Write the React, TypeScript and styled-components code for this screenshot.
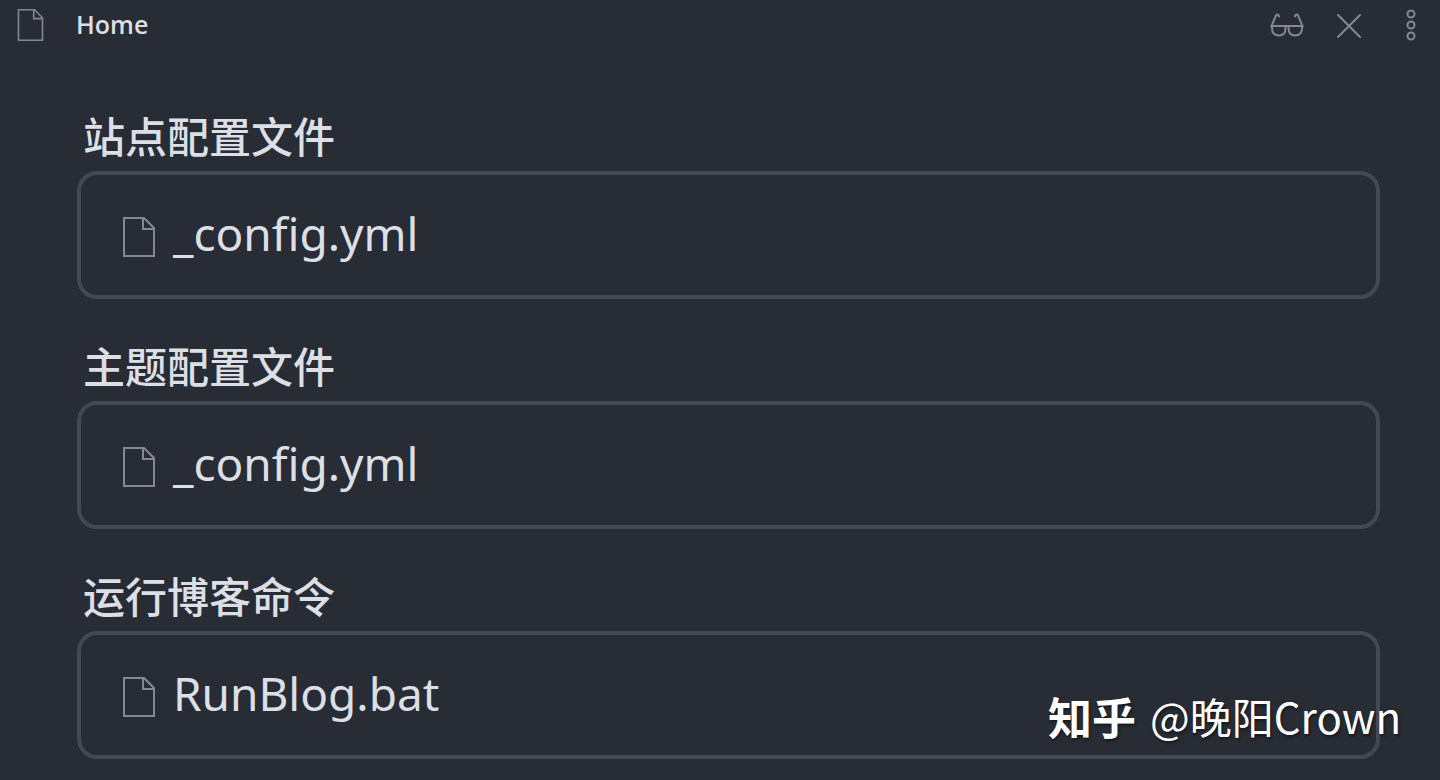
import React from 'react';
import styled, { createGlobalStyle } from 'styled-components';

const GlobalStyle = createGlobalStyle`
  *, *::before, *::after { box-sizing: border-box; }
  body {
    margin: 0;
    background: #282c34;
    color: #dcdfe5;
    font-family: "Noto Sans", "Noto Sans CJK SC", sans-serif;
  }
`;

const Page = styled.div`
  position: relative;
  min-height: 100vh;
`;

const Header = styled.header`
  display: flex;
  align-items: center;
  height: 50px;
  padding: 0 24px 0 17px;
`;

const Title = styled.h1`
  flex: 1;
  margin: 0 0 0 32px;
  padding-bottom: 2px;
  font-family: "Open Sans", sans-serif;
  font-size: 25px;
  line-height: 32px;
  font-weight: 600;
`;

const Actions = styled.div`
  display: flex;
  align-items: center;
`;

const IconButton = styled.button`
  display: flex;
  padding: 0;
  border: 0;
  background: none;
  color: #85888e;
  cursor: pointer;

  & + & {
    margin-left: 32px;
  }

  &:last-child:not(:first-child) {
    margin-left: 44px;
  }
`;

const Icon = styled.svg`
  flex: none;
  display: block;
  fill: none;
  stroke: currentColor;
  stroke-width: 2;
  stroke-linecap: round;
`;

const Main = styled.main`
  display: flex;
  flex-direction: column;
  gap: 34px;
  padding: 53px 60px 20px 77px;
`;

const Section = styled.section`
  display: flex;
  flex-direction: column;
`;

const SectionTitle = styled.h2`
  margin: 0;
  padding: 0 6px 4px;
  font-family: "Noto Sans CJK SC", sans-serif;
  font-size: 42px;
  line-height: 64px;
  font-weight: 500;
`;

const Card = styled.div`
  display: flex;
  height: 128px;
  padding: 0 42px;
  border: 4px solid #424955;
  border-radius: 20px;
`;

const FileLink = styled.a`
  display: flex;
  align-items: center;
  gap: 18px;
  color: inherit;
  font-size: 46px;
  line-height: 64px;
  text-decoration: none;
`;

const FileName = styled.span`
  padding-bottom: 4px;
`;

const FileMark = styled.span`
  display: flex;
  padding-top: 4px;
  color: #85888e;
`;

const Watermark = styled.div`
  position: absolute;
  right: 39px;
  bottom: 32px;
  display: flex;
  align-items: center;
  gap: 14px;
  color: #fff;
  font-family: "Noto Sans CJK SC", sans-serif;
  font-size: 42px;
  line-height: 64px;
  text-shadow: 1px 2px 3px rgba(0, 0, 0, 0.5);
`;

const Brand = styled.span`
  font-size: 44px;
  font-weight: 700;
`;

function FileIcon({ width, height }: { width: number; height: number }) {
  return (
    <Icon width={width} height={height} viewBox="0 0 32 40" aria-hidden="true">
      <path d="M1 1H21L31 11V39H1ZM20 1V12H31" />
    </Icon>
  );
}

const sections = [
  { title: '站点配置文件', file: '_config.yml' },
  { title: '主题配置文件', file: '_config.yml' },
  { title: '运行博客命令', file: 'RunBlog.bat' },
];

export default function App() {
  return (
    <>
      <GlobalStyle />
      <Page>
        <Header>
          <IconButton type="button" aria-label="File">
            <FileIcon width={27} height={32} />
          </IconButton>
          <Title>Home</Title>
          <Actions>
            <IconButton type="button" aria-label="Reading view">
              <Icon width="34" height="24" viewBox="0 0 34 24">
                <path d="M9 3.500C8.500 1 6.500 .8 5.800 3L1.500 13H32.500L28.200 3C27.500 .8 25.500 1 25 3.500M2 13V15C2 20 4.500 22.500 9 22.500S15.500 20 15.500 15V13M18.500 13V15C18.500 20 20.500 22.500 25 22.500S32 20 32 15V13" />
              </Icon>
            </IconButton>
            <IconButton type="button" aria-label="Close">
              <Icon width="26" height="26" viewBox="0 0 26 26">
                <path d="M2 3L24 25M24 3L2 25" />
              </Icon>
            </IconButton>
            <IconButton type="button" aria-label="More options">
              <Icon width="10" height="32" viewBox="0 0 10 32">
                <circle cx="5" cy="5" r="3.500" />
                <circle cx="5" cy="16" r="3.500" />
                <circle cx="5" cy="27" r="3.500" />
              </Icon>
            </IconButton>
          </Actions>
        </Header>
        <Main>
          {sections.map(({ title, file }) => (
            <Section key={title}>
              <SectionTitle>{title}</SectionTitle>
              <Card>
                <FileLink href="#">
                  <FileMark>
                    <FileIcon width={32} height={40} />
                  </FileMark>
                  <FileName>{file}</FileName>
                </FileLink>
              </Card>
            </Section>
          ))}
        </Main>
        <Watermark>
          <Brand>知乎</Brand>
          <span>@晚阳Crown</span>
        </Watermark>
      </Page>
    </>
  );
}
